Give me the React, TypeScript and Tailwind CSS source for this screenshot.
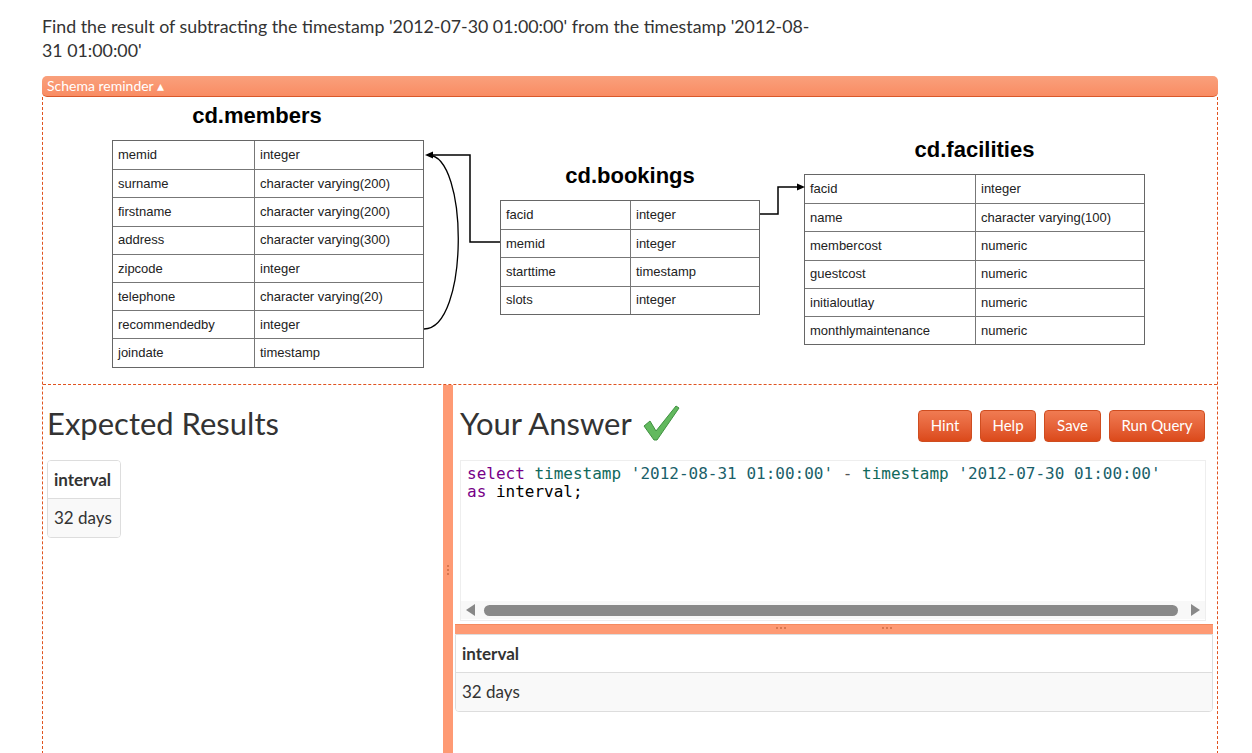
import React from "react";

const members = [
  ["memid", "integer"],
  ["surname", "character varying(200)"],
  ["firstname", "character varying(200)"],
  ["address", "character varying(300)"],
  ["zipcode", "integer"],
  ["telephone", "character varying(20)"],
  ["recommendedby", "integer"],
  ["joindate", "timestamp"],
];

const bookings = [
  ["facid", "integer"],
  ["memid", "integer"],
  ["starttime", "timestamp"],
  ["slots", "integer"],
];

const facilities = [
  ["facid", "integer"],
  ["name", "character varying(100)"],
  ["membercost", "numeric"],
  ["guestcost", "numeric"],
  ["initialoutlay", "numeric"],
  ["monthlymaintenance", "numeric"],
];

const uiFont = { fontFamily: "Lato, 'Open Sans', sans-serif" };

function SchemaTable({
  title,
  rows,
  width,
  col,
  className,
  titleClass = "",
}: {
  title: string;
  rows: string[][];
  width: number;
  col: number;
  className: string;
  titleClass?: string;
}) {
  return (
    <div className={className} style={{ width }}>
      <div
        className={`text-center text-[22px] leading-[24px] font-bold text-black mb-[12px] ${titleClass}`}
      >
        {title}
      </div>
      <div className="border border-[#666]">
        {rows.map(([name, type], i) => (
          <div
            key={name}
            className={`flex h-[28.2px] items-center text-[13px] text-[#222] ${
              i > 0 ? "border-t border-[#777]" : ""
            }`}
          >
            <div
              className="h-full flex items-center pl-[5px] border-r border-[#777]"
              style={{ width: col }}
            >
              {name}
            </div>
            <div className="pl-[5px]">{type}</div>
          </div>
        ))}
      </div>
    </div>
  );
}

function SchemaDiagram() {
  return (
    <div
      className="relative h-[287px]"
      style={{ fontFamily: "'Liberation Sans', Arial, sans-serif" }}
    >
      <SchemaTable
        title="cd.members"
        rows={members}
        width={312}
        col={142}
        className="absolute left-[69px] top-[7px]"
        titleClass="-translate-x-[11px]"
      />
      <SchemaTable
        title="cd.bookings"
        rows={bookings}
        width={260}
        col={130}
        className="absolute left-[457px] top-[67px]"
      />
      <SchemaTable
        title="cd.facilities"
        rows={facilities}
        width={341}
        col={171}
        className="absolute left-[761px] top-[41px]"
      />
      <svg
        className="absolute inset-0 pointer-events-none"
        width="1175"
        height="287"
        viewBox="0 0 1175 287"
      >
        <path
          d="M381 232 C 426 232 426 58 385 58"
          fill="none"
          stroke="#000"
          strokeWidth="1.3"
        />
        <path
          d="M457 145 H427 V58 H389"
          fill="none"
          stroke="#000"
          strokeWidth="1.5"
        />
        <polygon points="382,58 390,54.5 390,61.5" fill="#000" />
        <path
          d="M717 117 H735 V90 H755"
          fill="none"
          stroke="#000"
          strokeWidth="1.5"
        />
        <polygon points="762,90 754,86.5 754,93.5" fill="#000" />
      </svg>
    </div>
  );
}

function ResultTable({ wide }: { wide?: boolean }) {
  return (
    <div
      className={`border border-[#ddd] rounded-[4px] overflow-hidden text-[#333] ${
        wide ? "w-full rounded-t-none" : "w-[74px]"
      }`}
    >
      <div className="h-[38px] flex items-center px-[6px] text-[17px] font-bold border-b border-[#ddd] bg-white">
        interval
      </div>
      <div className="h-[38px] flex items-center px-[6px] text-[17px] bg-[#f9f9f9]">
        32 days
      </div>
    </div>
  );
}

function Check() {
  return (
    <svg width="38" height="38" viewBox="0 0 38 38">
      <polygon
        points="2,22 8,17 14,27 34,2 37,4 15,36 12,36"
        fill="#62b95e"
        stroke="#3f9140"
        strokeWidth="1"
        strokeLinejoin="round"
      />
    </svg>
  );
}

const buttons = [
  { label: "Hint", w: "w-[54px]" },
  { label: "Help", w: "w-[56px]" },
  { label: "Save", w: "w-[57px]" },
  { label: "Run Query", w: "w-[96px]" },
];

function Dots({ vertical }: { vertical?: boolean }) {
  return (
    <div className={`flex ${vertical ? "flex-col" : ""} gap-[2px]`}>
      <span className="w-[2px] h-[2px] bg-[#d9774f]" />
      <span className="w-[2px] h-[2px] bg-[#d9774f]" />
      <span className="w-[2px] h-[2px] bg-[#d9774f]" />
    </div>
  );
}

export default function App() {
  return (
    <div className="min-h-[753px] bg-white px-[42px] pt-[14px] text-[#333]" style={uiFont}>
      <p className="max-w-[780px] text-[17.8px] leading-[24px]">
        Find the result of subtracting the timestamp '2012-07-30 01:00:00' from the timestamp
        '2012-08-31 01:00:00'
      </p>

      <div className="mt-[14px] w-[1176px]">
        <div className="h-[21px] rounded-[5px] border-b border-[#d9582a] bg-gradient-to-b from-[#f9a07c] to-[#f98c63] pl-[5px] text-[14px] leading-[19px] text-white">
          Schema reminder ▴
        </div>

        <div className="border-x border-dashed border-[#e0531f]">
          <SchemaDiagram />
          <div className="border-t border-dashed border-[#e0531f]" />

          <div className="flex h-[369px]">
            {/* Expected results */}
            <div className="w-[400px] pl-[4px]">
              <div className="h-[75px] flex items-center">
                <h2 className="text-[31px] leading-[36px] text-[#333]">Expected Results</h2>
              </div>
              <ResultTable />
            </div>

            {/* vertical splitter */}
            <div className="w-[10px] bg-[#fe9a74] flex items-center justify-center">
              <Dots vertical />
            </div>

            {/* Your answer */}
            <div className="flex-1 flex flex-col pl-[2px] pr-[4px]">
              <div className="flex items-center justify-between pl-[5px] pr-[8px] h-[75px]">
                <div className="flex items-center gap-[10px]">
                  <h2 className="text-[31px] leading-[36px] text-[#333]">Your Answer</h2>
                  <Check />
                </div>
                <div className="flex gap-[8px] mt-[6px]">
                  {buttons.map((b) => (
                    <button
                      key={b.label}
                      className={`${b.w} h-[32px] rounded-[4px] border border-[#cf4d20] bg-gradient-to-b from-[#f07b52] to-[#db4919] text-[15px] text-white`}
                    >
                      {b.label}
                    </button>
                  ))}
                </div>
              </div>

              <div className="ml-[5px] mr-[7px] h-[161px] border border-[#eee] bg-white flex flex-col">
                <pre
                  className="flex-1 pl-[6px] pt-[4px] text-[16px] leading-[18px] text-black"
                  style={{ fontFamily: "'DejaVu Sans Mono', monospace" }}
                >
                  <span className="text-[#770088]">select</span>{" "}
                  <span className="text-[#11695c]">timestamp</span>{" "}
                  <span className="text-[#1a5f6a]">'2012-08-31 01:00:00'</span>{" "}
                  <span className="text-[#555]">-</span>{" "}
                  <span className="text-[#11695c]">timestamp</span>{" "}
                  <span className="text-[#1a5f6a]">'2012-07-30 01:00:00'</span>
                  {"\n"}
                  <span className="text-[#770088]">as</span> interval;
                </pre>
                <div className="h-[18px] flex items-center bg-[#f8f8f8] px-[5px] gap-[9px] mb-[1px]">
                  <svg width="9" height="12" viewBox="0 0 9 12">
                    <polygon points="0,6 9,0 9,12" fill="#888" />
                  </svg>
                  <div className="flex-1 h-[11px] rounded-full bg-[#898989]" />
                  <svg width="9" height="12" viewBox="0 0 9 12" className="ml-[4px]">
                    <polygon points="9,6 0,0 0,12" fill="#888" />
                  </svg>
                </div>
              </div>

              <div className="mt-[3px] h-[10px] bg-[#fe9a74] border-t border-[#f58a5f] flex items-start justify-center gap-[96px] pt-[2px]">
                <Dots />
                <Dots />
              </div>

              <ResultTable wide />
            </div>
          </div>
        </div>
      </div>
    </div>
  );
}
